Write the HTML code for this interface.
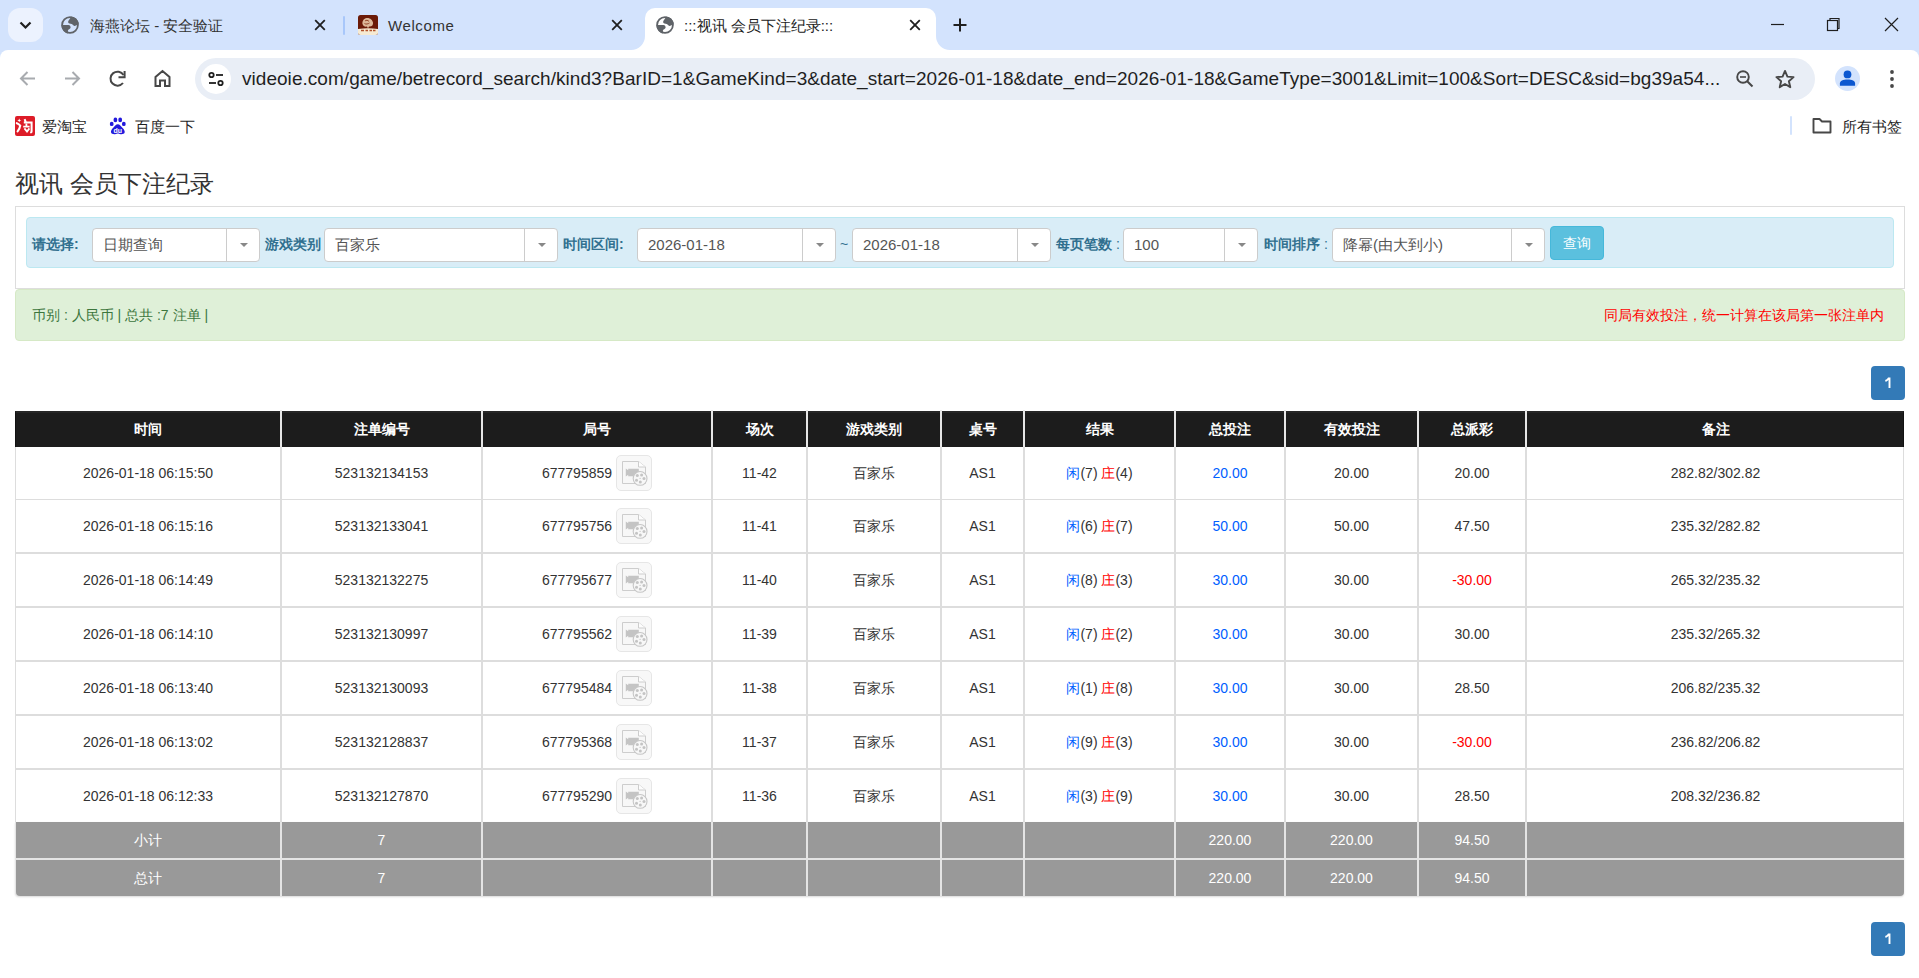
<!DOCTYPE html><html><head><meta charset="utf-8"><title>:::视讯 会员下注纪录:::</title><style>
*{margin:0;padding:0;box-sizing:border-box}
html,body{width:1919px;height:978px;overflow:hidden;background:#fff;font-family:"Liberation Sans",sans-serif;color:#333}
.a{position:absolute}
.t{position:absolute;white-space:nowrap}
svg{position:absolute;overflow:visible}
</style></head><body>
<div class="a" style="left:0;top:0;width:1919px;height:62px;background:#d3e3fd"></div>
<div class="a" style="left:8px;top:8px;width:35px;height:34px;border-radius:12px;background:#ecf2fe"></div>
<svg style="left:0;top:0" width="50" height="50"><path d="M20.5 22.5 L25.5 27.5 L30.5 22.5" fill="none" stroke="#1f1f1f" stroke-width="2.2"/></svg>
<svg style="left:60px;top:15px" width="20" height="20" viewBox="-10 -10 20 20"><circle cx="0" cy="0" r="7.9" fill="none" stroke="#5f6368" stroke-width="1.8"/><path d="M1 -8.6 C0.5 -6.5 -1.9 -4.8 -1.9 -2.9 C-1.9 -1.2 0.4 -1.4 1.7 -0.9 C3 -0.4 3.1 0.9 4.4 0.9 C5.7 0.9 7.1 0.1 8.4 -0.4 L8.7 -1.5 A8.7 8.7 0 0 0 1 -8.6 Z" fill="#5f6368"/><path d="M-8.6 0.1 L-1.6 0.1 C-0.1 0.1 0.7 1.4 0.6 2.7 C0.4 4.1 -2.1 4.1 -2.1 5.6 L-1.9 8.5 A8.7 8.7 0 0 1 -8.6 0.1 Z" fill="#5f6368"/></svg>
<div class="t" style="left:90px;top:17px;font-size:15px;line-height:18px;color:#333">海燕论坛 - 安全验证</div>
<svg style="left:310px;top:15px" width="20" height="20"><path d="M5.2 5.2 L14.8 14.8 M14.8 5.2 L5.2 14.8" stroke="#1f1f1f" stroke-width="1.8" fill="none"/></svg>
<div class="a" style="left:343px;top:16px;width:2px;height:19px;border-radius:1px;background:#a8c7fa"></div>
<svg style="left:358px;top:15px" width="20" height="20"><rect x="0" y="0" width="20" height="20" rx="2.5" fill="#6b1a07"/><path d="M0 14 Q10 12.5 20 14 V17.5 Q20 20 17.5 20 H2.5 Q0 20 0 17.5 Z" fill="#f6ead2"/><path d="M8.5 3 C6 3.5 4 6 4.5 9 C5 11 7 12 9 11.5 L10 13.5 L11 11.5 C13.5 12 15.5 10 15 7.5 C14.5 5 12 2.5 8.5 3 Z" fill="#e8c9a8" opacity="0.9"/><path d="M7 6 C8 5 10 5 11 6.5 M6.5 8.5 C8 9.5 10 9 11.5 8" stroke="#8a3a1e" stroke-width="0.9" fill="none"/><path d="M3 15.5 H6 M7.5 15.5 H10 M11.5 15.5 H14 M15 15.5 H17.5" stroke="#b0502a" stroke-width="1.6"/></svg>
<div class="t" style="left:388px;top:17px;font-size:15px;letter-spacing:0.6px;line-height:18px;color:#333">Welcome</div>
<svg style="left:607px;top:15px" width="20" height="20"><path d="M5.2 5.2 L14.8 14.8 M14.8 5.2 L5.2 14.8" stroke="#1f1f1f" stroke-width="1.8" fill="none"/></svg>
<div class="a" style="left:645px;top:8px;width:291px;height:43px;background:#fff;border-radius:10px 10px 0 0"></div>
<svg style="left:631px;top:36px" width="14" height="14"><path d="M0 14 A14 14 0 0 0 14 0 L14 14 Z" fill="#fff"/></svg>
<svg style="left:936px;top:36px" width="14" height="14"><path d="M14 14 A14 14 0 0 1 0 0 L0 14 Z" fill="#fff"/></svg>
<svg style="left:655px;top:15px" width="20" height="20" viewBox="-10 -10 20 20"><circle cx="0" cy="0" r="7.9" fill="none" stroke="#5f6368" stroke-width="1.8"/><path d="M1 -8.6 C0.5 -6.5 -1.9 -4.8 -1.9 -2.9 C-1.9 -1.2 0.4 -1.4 1.7 -0.9 C3 -0.4 3.1 0.9 4.4 0.9 C5.7 0.9 7.1 0.1 8.4 -0.4 L8.7 -1.5 A8.7 8.7 0 0 0 1 -8.6 Z" fill="#5f6368"/><path d="M-8.6 0.1 L-1.6 0.1 C-0.1 0.1 0.7 1.4 0.6 2.7 C0.4 4.1 -2.1 4.1 -2.1 5.6 L-1.9 8.5 A8.7 8.7 0 0 1 -8.6 0.1 Z" fill="#5f6368"/></svg>
<div class="t" style="left:684px;top:17px;font-size:15px;line-height:18px;color:#222">:::视讯 会员下注纪录:::</div>
<svg style="left:905px;top:15px" width="20" height="20"><path d="M5.2 5.2 L14.8 14.8 M14.8 5.2 L5.2 14.8" stroke="#1f1f1f" stroke-width="1.8" fill="none"/></svg>
<svg style="left:950px;top:15px" width="20" height="20"><path d="M10 3.5 V16.5 M3.5 10 H16.5" stroke="#1f1f1f" stroke-width="2" fill="none"/></svg>
<svg style="left:1760px;top:10px" width="150" height="30"><path d="M11 14.5 H24" stroke="#1f1f1f" stroke-width="1.2"/><rect x="67.5" y="10.5" width="10" height="10" fill="none" stroke="#1f1f1f" stroke-width="1.2"/><path d="M70 10.5 V8.5 H79 V18.5 H77.5" fill="none" stroke="#1f1f1f" stroke-width="1.2"/><path d="M125 8 L138 21 M138 8 L125 21" stroke="#1f1f1f" stroke-width="1.2"/></svg>
<div class="a" style="left:0;top:50px;width:1919px;height:98px;background:#fff;border-radius:8px 8px 0 0"></div>
<svg style="left:0;top:50px" width="200" height="55"><path d="M35 28.5 H21 M27.5 22 L21 28.5 L27.5 35" stroke="#a8abaf" stroke-width="2" fill="none"/><path d="M65 28.5 H79 M72.5 22 L79 28.5 L72.5 35" stroke="#a8abaf" stroke-width="2" fill="none"/><path d="M123.5 25 A7 7 0 1 0 123 33" stroke="#474747" stroke-width="2" fill="none"/><path d="M124.6 21 V27.3 H118.5" fill="none" stroke="#474747" stroke-width="2"/><path d="M155.5 36 V27 L162.5 21 L169.5 27 V36 H165 V30.5 H160 V36 Z" stroke="#474747" stroke-width="2" fill="none" stroke-linejoin="miter"/></svg>
<div class="a" style="left:195px;top:58px;width:1620px;height:42px;border-radius:21px;background:#e9eef6"></div>
<div class="a" style="left:201px;top:64px;width:30px;height:30px;border-radius:15px;background:#fff"></div>
<svg style="left:201px;top:64px" width="30" height="30"><circle cx="10.5" cy="11" r="2.2" fill="none" stroke="#1f1f1f" stroke-width="1.8"/><path d="M15 11 H22" stroke="#1f1f1f" stroke-width="1.8"/><circle cx="19.5" cy="19" r="2.2" fill="none" stroke="#1f1f1f" stroke-width="1.8"/><path d="M8 19 H15" stroke="#1f1f1f" stroke-width="1.8"/></svg>
<div class="t" id="url" style="left:242px;top:67px;font-size:19px;line-height:24px;letter-spacing:0.04px;color:#1f1f1f">videoie.com/game/betrecord_search/kind3?BarID=1&amp;GameKind=3&amp;date_start=2026-01-18&amp;date_end=2026-01-18&amp;GameType=3001&amp;Limit=100&amp;Sort=DESC&amp;sid=bg39a54...</div>
<svg style="left:1730px;top:64px" width="100" height="30"><circle cx="13" cy="13" r="5.8" fill="none" stroke="#474747" stroke-width="1.9"/><path d="M10 13 H16" stroke="#474747" stroke-width="1.6"/><path d="M17.2 17.2 L22.5 22.5" stroke="#474747" stroke-width="2"/><path d="M55.00 6.90 L57.41 12.58 L63.56 13.12 L58.90 17.17 L60.29 23.18 L55.00 20.00 L49.71 23.18 L51.10 17.17 L46.44 13.12 L52.59 12.58 Z" fill="none" stroke="#474747" stroke-width="1.9" stroke-linejoin="round"/></svg>
<div class="a" style="left:1835px;top:66px;width:25px;height:25px;border-radius:13px;background:#d3e3fd"></div>
<svg style="left:1835px;top:66px" width="25" height="25"><circle cx="12.5" cy="8.4" r="3.9" fill="#0b57d0"/><path d="M4.9 19.7 V17.6 C4.9 15 8 13.6 12.5 13.6 C17 13.6 20.1 15 20.1 17.6 V19.7 Z" fill="#0b57d0"/></svg>
<svg style="left:1882px;top:64px" width="20" height="30"><circle cx="10" cy="8" r="1.9" fill="#474747"/><circle cx="10" cy="15" r="1.9" fill="#474747"/><circle cx="10" cy="22" r="1.9" fill="#474747"/></svg>
<svg style="left:15px;top:116px" width="20" height="20"><rect x="0" y="0" width="20" height="20" rx="2" fill="#dd1c28"/><path d="M4.2 2.6 L4.9 4 L6.3 4.4 L4.9 4.9 L4.2 6.3 L3.6 4.9 L2.2 4.4 L3.6 4 Z" fill="#fff"/><path d="M1.8 7.2 Q4 8 5.2 9.6 Q4.8 12.8 2.6 15.4" fill="none" stroke="#fff" stroke-width="2.1" stroke-linecap="round"/><path d="M9.6 3.2 L10.8 6.2 M8.8 6.6 H16.6 V15.6 Q16.6 16.6 15.2 16.2" fill="none" stroke="#fff" stroke-width="2"/><path d="M8.2 10.6 H14.6 M11.4 7.6 V10.8" fill="none" stroke="#fff" stroke-width="1.8"/><path d="M9.4 12.4 L12 15.6 L14.4 12.4" fill="none" stroke="#fff" stroke-width="1.8"/></svg>
<div class="t" style="left:42px;top:118px;font-size:15px;line-height:18px;color:#1f1f1f">爱淘宝</div>
<svg style="left:108px;top:117px" width="20" height="20"><ellipse cx="3.7" cy="6.9" rx="1.9" ry="2.2" fill="#2319dc"/><ellipse cx="7.4" cy="2.9" rx="1.9" ry="2.3" fill="#2319dc"/><ellipse cx="12.2" cy="2.9" rx="1.9" ry="2.3" fill="#2319dc"/><ellipse cx="15.8" cy="6.9" rx="1.9" ry="2.2" fill="#2319dc"/><path d="M9.8 7.3 C8 7.3 6.5 9.5 5 11 C3.5 12.5 2.8 14 3 15.3 C3.3 17 5 17.3 7 17.2 C8.5 17.1 9 16.6 9.8 16.6 C10.6 16.6 11.2 17.1 12.7 17.2 C14.7 17.3 16.5 17 16.7 15.3 C16.9 14 16 12.5 14.6 11 C13.1 9.5 11.6 7.3 9.8 7.3 Z" fill="#2319dc"/><text x="9.7" y="15.6" font-size="7" font-weight="bold" fill="#fff" text-anchor="middle" font-family="Liberation Sans">du</text></svg>
<div class="t" style="left:135px;top:118px;font-size:15px;line-height:18px;color:#1f1f1f">百度一下</div>
<div class="a" style="left:1790px;top:116px;width:2px;height:19px;border-radius:1px;background:#d3e3fd"></div>
<svg style="left:1810px;top:114px" width="25" height="22"><path d="M3.5 5 H9.5 L12 7.5 H20.5 V18.5 H3.5 Z" fill="none" stroke="#474747" stroke-width="1.9" stroke-linejoin="round"/></svg>
<div class="t" style="left:1842px;top:118px;font-size:15px;line-height:18px;color:#1f1f1f">所有书签</div>
<div class="t" style="left:15px;top:170px;font-size:24px;line-height:28px;color:#333">视讯 会员下注纪录</div>
<div class="a" style="left:15px;top:206px;width:1890px;height:83px;border:1px solid #ddd;border-bottom-color:#ddd"></div>
<div class="a" style="left:26px;top:217px;width:1868px;height:51px;border:1px solid #bce8f1;background:#d9edf7;border-radius:4px"></div>
<div class="t" style="left:32px;top:236px;font-size:14px;line-height:17px;font-weight:bold;color:#31708f">请选择:</div>
<div class="a" style="left:92px;top:228px;width:168px;height:34px;border:1px solid #ccc;border-radius:4px;background:#fff"></div>
<div class="a" style="left:226px;top:229px;width:1px;height:32px;background:#ccc"></div>
<svg style="left:239px;top:240px" width="12" height="10"><path d="M1 3 H9 L5 7 Z" fill="#888"/></svg>
<div class="t" style="left:103px;top:236px;font-size:15px;line-height:18px;color:#555">日期查询</div>
<div class="t" style="left:265px;top:236px;font-size:14px;line-height:17px;font-weight:bold;color:#31708f">游戏类别</div>
<div class="a" style="left:324px;top:228px;width:234px;height:34px;border:1px solid #ccc;border-radius:4px;background:#fff"></div>
<div class="a" style="left:524px;top:229px;width:1px;height:32px;background:#ccc"></div>
<svg style="left:537px;top:240px" width="12" height="10"><path d="M1 3 H9 L5 7 Z" fill="#888"/></svg>
<div class="t" style="left:335px;top:236px;font-size:15px;line-height:18px;color:#555">百家乐</div>
<div class="t" style="left:563px;top:236px;font-size:14px;line-height:17px;font-weight:bold;color:#31708f">时间区间:</div>
<div class="a" style="left:637px;top:228px;width:199px;height:34px;border:1px solid #ccc;border-radius:4px;background:#fff"></div>
<div class="a" style="left:802px;top:229px;width:1px;height:32px;background:#ccc"></div>
<svg style="left:815px;top:240px" width="12" height="10"><path d="M1 3 H9 L5 7 Z" fill="#888"/></svg>
<div class="t" style="left:648px;top:236px;font-size:15px;line-height:18px;color:#555">2026-01-18</div>
<div class="t" style="left:840px;top:236px;font-size:14px;line-height:17px;color:#31708f">~</div>
<div class="a" style="left:852px;top:228px;width:199px;height:34px;border:1px solid #ccc;border-radius:4px;background:#fff"></div>
<div class="a" style="left:1017px;top:229px;width:1px;height:32px;background:#ccc"></div>
<svg style="left:1030px;top:240px" width="12" height="10"><path d="M1 3 H9 L5 7 Z" fill="#888"/></svg>
<div class="t" style="left:863px;top:236px;font-size:15px;line-height:18px;color:#555">2026-01-18</div>
<div class="t" style="left:1056px;top:236px;font-size:14px;line-height:17px;font-weight:bold;color:#31708f">每页笔数<span style="font-weight:normal"> :</span></div>
<div class="a" style="left:1123px;top:228px;width:135px;height:34px;border:1px solid #ccc;border-radius:4px;background:#fff"></div>
<div class="a" style="left:1224px;top:229px;width:1px;height:32px;background:#ccc"></div>
<svg style="left:1237px;top:240px" width="12" height="10"><path d="M1 3 H9 L5 7 Z" fill="#888"/></svg>
<div class="t" style="left:1134px;top:236px;font-size:15px;line-height:18px;color:#555">100</div>
<div class="t" style="left:1264px;top:236px;font-size:14px;line-height:17px;font-weight:bold;color:#31708f">时间排序<span style="font-weight:normal"> :</span></div>
<div class="a" style="left:1332px;top:228px;width:213px;height:34px;border:1px solid #ccc;border-radius:4px;background:#fff"></div>
<div class="a" style="left:1511px;top:229px;width:1px;height:32px;background:#ccc"></div>
<svg style="left:1524px;top:240px" width="12" height="10"><path d="M1 3 H9 L5 7 Z" fill="#888"/></svg>
<div class="t" style="left:1343px;top:236px;font-size:15px;line-height:18px;color:#555">降幂(由大到小)</div>
<div class="a" style="left:1550px;top:226px;width:54px;height:34px;border-radius:4px;background:#5bc0de;border:1px solid #46b8da;color:#fff;font-size:14px;line-height:32px;text-align:center">查询</div>
<div class="a" style="left:15px;top:289px;width:1890px;height:52px;border:1px solid #d6e9c6;background:#dff0d8;border-radius:4px"></div>
<div class="t" style="left:32px;top:307px;font-size:14px;line-height:17px;color:#3c763d">币别 : 人民币 | 总共 :7 注单 |</div>
<div class="t" style="left:1604px;top:307px;font-size:14px;line-height:17px;color:#ff0000">同局有效投注，统一计算在该局第一张注单内</div>
<div class="a" style="left:1871px;top:366px;width:34px;height:34px;border-radius:4px;background:#337ab7"></div>
<svg style="left:1871px;top:366px" width="34" height="34"><path d="M14.4 15 C15.9 14.5 17 13.6 17.6 12.4 H18.5 V22" fill="none" stroke="#fff" stroke-width="1.9"/></svg>
<div class="a" style="left:1871px;top:922px;width:34px;height:34px;border-radius:4px;background:#337ab7"></div>
<svg style="left:1871px;top:922px" width="34" height="34"><path d="M14.4 15 C15.9 14.5 17 13.6 17.6 12.4 H18.5 V22" fill="none" stroke="#fff" stroke-width="1.9"/></svg>
<div class="a" style="left:15px;top:411px;width:1889px;height:36px;background:#1c1c1c;border-top:2px solid #262626;border-left:1px solid #111;border-right:1px solid #111"></div>
<div class="t" style="left:16px;top:411px;width:264px;height:36px;line-height:36px;text-align:center;font-size:14px;font-weight:bold;color:#fff">时间</div>
<div class="t" style="left:282px;top:411px;width:199px;height:36px;line-height:36px;text-align:center;font-size:14px;font-weight:bold;color:#fff">注单编号</div>
<div class="t" style="left:483px;top:411px;width:228px;height:36px;line-height:36px;text-align:center;font-size:14px;font-weight:bold;color:#fff">局号</div>
<div class="t" style="left:713px;top:411px;width:93px;height:36px;line-height:36px;text-align:center;font-size:14px;font-weight:bold;color:#fff">场次</div>
<div class="t" style="left:808px;top:411px;width:132px;height:36px;line-height:36px;text-align:center;font-size:14px;font-weight:bold;color:#fff">游戏类别</div>
<div class="t" style="left:942px;top:411px;width:81px;height:36px;line-height:36px;text-align:center;font-size:14px;font-weight:bold;color:#fff">桌号</div>
<div class="t" style="left:1025px;top:411px;width:149px;height:36px;line-height:36px;text-align:center;font-size:14px;font-weight:bold;color:#fff">结果</div>
<div class="t" style="left:1176px;top:411px;width:108px;height:36px;line-height:36px;text-align:center;font-size:14px;font-weight:bold;color:#fff">总投注</div>
<div class="t" style="left:1286px;top:411px;width:131px;height:36px;line-height:36px;text-align:center;font-size:14px;font-weight:bold;color:#fff">有效投注</div>
<div class="t" style="left:1419px;top:411px;width:106px;height:36px;line-height:36px;text-align:center;font-size:14px;font-weight:bold;color:#fff">总派彩</div>
<div class="t" style="left:1527px;top:411px;width:377px;height:36px;line-height:36px;text-align:center;font-size:14px;font-weight:bold;color:#fff">备注</div>
<div class="a" style="left:280px;top:410px;width:2px;height:37px;background:#e6e6e6"></div>
<div class="a" style="left:481px;top:410px;width:2px;height:37px;background:#e6e6e6"></div>
<div class="a" style="left:711px;top:410px;width:2px;height:37px;background:#e6e6e6"></div>
<div class="a" style="left:806px;top:410px;width:2px;height:37px;background:#e6e6e6"></div>
<div class="a" style="left:940px;top:410px;width:2px;height:37px;background:#e6e6e6"></div>
<div class="a" style="left:1023px;top:410px;width:2px;height:37px;background:#e6e6e6"></div>
<div class="a" style="left:1174px;top:410px;width:2px;height:37px;background:#e6e6e6"></div>
<div class="a" style="left:1284px;top:410px;width:2px;height:37px;background:#e6e6e6"></div>
<div class="a" style="left:1417px;top:410px;width:2px;height:37px;background:#e6e6e6"></div>
<div class="a" style="left:1525px;top:410px;width:2px;height:37px;background:#e6e6e6"></div>
<div class="a" style="left:15px;top:447px;width:1889px;height:375px;border-left:1px solid #ddd;border-right:1px solid #ddd"></div>
<div class="a" style="left:15px;top:499px;width:1889px;height:1px;background:#ddd"></div>
<div class="a" style="left:15px;top:552px;width:1889px;height:2px;background:#ddd"></div>
<div class="a" style="left:15px;top:606px;width:1889px;height:2px;background:#ddd"></div>
<div class="a" style="left:15px;top:660px;width:1889px;height:2px;background:#ddd"></div>
<div class="a" style="left:15px;top:714px;width:1889px;height:2px;background:#ddd"></div>
<div class="a" style="left:15px;top:768px;width:1889px;height:2px;background:#ddd"></div>
<div class="a" style="left:280px;top:447px;width:2px;height:375px;background:#ddd"></div>
<div class="a" style="left:481px;top:447px;width:2px;height:375px;background:#ddd"></div>
<div class="a" style="left:711px;top:447px;width:2px;height:375px;background:#ddd"></div>
<div class="a" style="left:806px;top:447px;width:2px;height:375px;background:#ddd"></div>
<div class="a" style="left:940px;top:447px;width:2px;height:375px;background:#ddd"></div>
<div class="a" style="left:1023px;top:447px;width:2px;height:375px;background:#ddd"></div>
<div class="a" style="left:1174px;top:447px;width:2px;height:375px;background:#ddd"></div>
<div class="a" style="left:1284px;top:447px;width:2px;height:375px;background:#ddd"></div>
<div class="a" style="left:1417px;top:447px;width:2px;height:375px;background:#ddd"></div>
<div class="a" style="left:1525px;top:447px;width:2px;height:375px;background:#ddd"></div>
<div class="t" style="left:16px;top:447px;width:264px;height:52px;line-height:52px;text-align:center;font-size:14px;">2026-01-18 06:15:50</div>
<div class="t" style="left:282px;top:447px;width:199px;height:52px;line-height:52px;text-align:center;font-size:14px;">523132134153</div>
<div class="a" style="left:483px;top:447px;width:228px;height:52px;display:flex;align-items:center;justify-content:center;font-size:14px"><span style="margin-top:-1px">677795859</span><span style="display:block;position:relative;width:36px;height:36px;margin-left:4px;margin-top:-1px;border:1px solid #e6e6e6;border-radius:5px;background:#f8f8f8"><svg style="left:0;top:0" width="34" height="34"><path d="M5.5 5.5 H21.5 L28.5 11 V27.5 H5.5 Z" fill="#f7f7f7" stroke="#cdcdcd" stroke-width="1"/><path d="M21.5 5.5 V11 H28.5" fill="#fdfdfd" stroke="#cdcdcd"/><path d="M8.8 12.5 L11.2 14.2 V12.8 H21.8 V20.2 H11.2 V18.8 L8.8 20.5 Z" fill="#c4c4c4"/><circle cx="23.1" cy="22.4" r="6.9" fill="#f7f7f7" stroke="#c6c6c6" stroke-width="1.1"/><circle cx="20.3" cy="19.6" r="1.5" fill="#c4c4c4"/><circle cx="24.6" cy="19" r="1.5" fill="#c4c4c4"/><circle cx="27" cy="22.6" r="1.5" fill="#c4c4c4"/><circle cx="23.3" cy="26" r="1.5" fill="#c4c4c4"/><circle cx="19.5" cy="24.3" r="1.5" fill="#c4c4c4"/><circle cx="23.1" cy="22.4" r="0.6" fill="#c4c4c4"/></svg></span></div>
<div class="t" style="left:713px;top:447px;width:93px;height:52px;line-height:52px;text-align:center;font-size:14px;">11-42</div>
<div class="t" style="left:808px;top:447px;width:132px;height:52px;line-height:52px;text-align:center;font-size:14px;">百家乐</div>
<div class="t" style="left:942px;top:447px;width:81px;height:52px;line-height:52px;text-align:center;font-size:14px;">AS1</div>
<div class="t" style="left:1025px;top:447px;width:149px;height:52px;line-height:52px;text-align:center;font-size:14px;"><span style="color:#0060ff">闲</span>(7) <span style="color:#ff0000">庄</span>(4)</div>
<div class="t" style="left:1176px;top:447px;width:108px;height:52px;line-height:52px;text-align:center;font-size:14px;color:#0060ff">20.00</div>
<div class="t" style="left:1286px;top:447px;width:131px;height:52px;line-height:52px;text-align:center;font-size:14px;">20.00</div>
<div class="t" style="left:1419px;top:447px;width:106px;height:52px;line-height:52px;text-align:center;font-size:14px;">20.00</div>
<div class="t" style="left:1527px;top:447px;width:377px;height:52px;line-height:52px;text-align:center;font-size:14px;">282.82/302.82</div>
<div class="t" style="left:16px;top:500px;width:264px;height:52px;line-height:52px;text-align:center;font-size:14px;">2026-01-18 06:15:16</div>
<div class="t" style="left:282px;top:500px;width:199px;height:52px;line-height:52px;text-align:center;font-size:14px;">523132133041</div>
<div class="a" style="left:483px;top:500px;width:228px;height:52px;display:flex;align-items:center;justify-content:center;font-size:14px"><span style="margin-top:-1px">677795756</span><span style="display:block;position:relative;width:36px;height:36px;margin-left:4px;margin-top:-1px;border:1px solid #e6e6e6;border-radius:5px;background:#f8f8f8"><svg style="left:0;top:0" width="34" height="34"><path d="M5.5 5.5 H21.5 L28.5 11 V27.5 H5.5 Z" fill="#f7f7f7" stroke="#cdcdcd" stroke-width="1"/><path d="M21.5 5.5 V11 H28.5" fill="#fdfdfd" stroke="#cdcdcd"/><path d="M8.8 12.5 L11.2 14.2 V12.8 H21.8 V20.2 H11.2 V18.8 L8.8 20.5 Z" fill="#c4c4c4"/><circle cx="23.1" cy="22.4" r="6.9" fill="#f7f7f7" stroke="#c6c6c6" stroke-width="1.1"/><circle cx="20.3" cy="19.6" r="1.5" fill="#c4c4c4"/><circle cx="24.6" cy="19" r="1.5" fill="#c4c4c4"/><circle cx="27" cy="22.6" r="1.5" fill="#c4c4c4"/><circle cx="23.3" cy="26" r="1.5" fill="#c4c4c4"/><circle cx="19.5" cy="24.3" r="1.5" fill="#c4c4c4"/><circle cx="23.1" cy="22.4" r="0.6" fill="#c4c4c4"/></svg></span></div>
<div class="t" style="left:713px;top:500px;width:93px;height:52px;line-height:52px;text-align:center;font-size:14px;">11-41</div>
<div class="t" style="left:808px;top:500px;width:132px;height:52px;line-height:52px;text-align:center;font-size:14px;">百家乐</div>
<div class="t" style="left:942px;top:500px;width:81px;height:52px;line-height:52px;text-align:center;font-size:14px;">AS1</div>
<div class="t" style="left:1025px;top:500px;width:149px;height:52px;line-height:52px;text-align:center;font-size:14px;"><span style="color:#0060ff">闲</span>(6) <span style="color:#ff0000">庄</span>(7)</div>
<div class="t" style="left:1176px;top:500px;width:108px;height:52px;line-height:52px;text-align:center;font-size:14px;color:#0060ff">50.00</div>
<div class="t" style="left:1286px;top:500px;width:131px;height:52px;line-height:52px;text-align:center;font-size:14px;">50.00</div>
<div class="t" style="left:1419px;top:500px;width:106px;height:52px;line-height:52px;text-align:center;font-size:14px;">47.50</div>
<div class="t" style="left:1527px;top:500px;width:377px;height:52px;line-height:52px;text-align:center;font-size:14px;">235.32/282.82</div>
<div class="t" style="left:16px;top:554px;width:264px;height:52px;line-height:52px;text-align:center;font-size:14px;">2026-01-18 06:14:49</div>
<div class="t" style="left:282px;top:554px;width:199px;height:52px;line-height:52px;text-align:center;font-size:14px;">523132132275</div>
<div class="a" style="left:483px;top:554px;width:228px;height:52px;display:flex;align-items:center;justify-content:center;font-size:14px"><span style="margin-top:-1px">677795677</span><span style="display:block;position:relative;width:36px;height:36px;margin-left:4px;margin-top:-1px;border:1px solid #e6e6e6;border-radius:5px;background:#f8f8f8"><svg style="left:0;top:0" width="34" height="34"><path d="M5.5 5.5 H21.5 L28.5 11 V27.5 H5.5 Z" fill="#f7f7f7" stroke="#cdcdcd" stroke-width="1"/><path d="M21.5 5.5 V11 H28.5" fill="#fdfdfd" stroke="#cdcdcd"/><path d="M8.8 12.5 L11.2 14.2 V12.8 H21.8 V20.2 H11.2 V18.8 L8.8 20.5 Z" fill="#c4c4c4"/><circle cx="23.1" cy="22.4" r="6.9" fill="#f7f7f7" stroke="#c6c6c6" stroke-width="1.1"/><circle cx="20.3" cy="19.6" r="1.5" fill="#c4c4c4"/><circle cx="24.6" cy="19" r="1.5" fill="#c4c4c4"/><circle cx="27" cy="22.6" r="1.5" fill="#c4c4c4"/><circle cx="23.3" cy="26" r="1.5" fill="#c4c4c4"/><circle cx="19.5" cy="24.3" r="1.5" fill="#c4c4c4"/><circle cx="23.1" cy="22.4" r="0.6" fill="#c4c4c4"/></svg></span></div>
<div class="t" style="left:713px;top:554px;width:93px;height:52px;line-height:52px;text-align:center;font-size:14px;">11-40</div>
<div class="t" style="left:808px;top:554px;width:132px;height:52px;line-height:52px;text-align:center;font-size:14px;">百家乐</div>
<div class="t" style="left:942px;top:554px;width:81px;height:52px;line-height:52px;text-align:center;font-size:14px;">AS1</div>
<div class="t" style="left:1025px;top:554px;width:149px;height:52px;line-height:52px;text-align:center;font-size:14px;"><span style="color:#0060ff">闲</span>(8) <span style="color:#ff0000">庄</span>(3)</div>
<div class="t" style="left:1176px;top:554px;width:108px;height:52px;line-height:52px;text-align:center;font-size:14px;color:#0060ff">30.00</div>
<div class="t" style="left:1286px;top:554px;width:131px;height:52px;line-height:52px;text-align:center;font-size:14px;">30.00</div>
<div class="t" style="left:1419px;top:554px;width:106px;height:52px;line-height:52px;text-align:center;font-size:14px;color:#ff0000">-30.00</div>
<div class="t" style="left:1527px;top:554px;width:377px;height:52px;line-height:52px;text-align:center;font-size:14px;">265.32/235.32</div>
<div class="t" style="left:16px;top:608px;width:264px;height:52px;line-height:52px;text-align:center;font-size:14px;">2026-01-18 06:14:10</div>
<div class="t" style="left:282px;top:608px;width:199px;height:52px;line-height:52px;text-align:center;font-size:14px;">523132130997</div>
<div class="a" style="left:483px;top:608px;width:228px;height:52px;display:flex;align-items:center;justify-content:center;font-size:14px"><span style="margin-top:-1px">677795562</span><span style="display:block;position:relative;width:36px;height:36px;margin-left:4px;margin-top:-1px;border:1px solid #e6e6e6;border-radius:5px;background:#f8f8f8"><svg style="left:0;top:0" width="34" height="34"><path d="M5.5 5.5 H21.5 L28.5 11 V27.5 H5.5 Z" fill="#f7f7f7" stroke="#cdcdcd" stroke-width="1"/><path d="M21.5 5.5 V11 H28.5" fill="#fdfdfd" stroke="#cdcdcd"/><path d="M8.8 12.5 L11.2 14.2 V12.8 H21.8 V20.2 H11.2 V18.8 L8.8 20.5 Z" fill="#c4c4c4"/><circle cx="23.1" cy="22.4" r="6.9" fill="#f7f7f7" stroke="#c6c6c6" stroke-width="1.1"/><circle cx="20.3" cy="19.6" r="1.5" fill="#c4c4c4"/><circle cx="24.6" cy="19" r="1.5" fill="#c4c4c4"/><circle cx="27" cy="22.6" r="1.5" fill="#c4c4c4"/><circle cx="23.3" cy="26" r="1.5" fill="#c4c4c4"/><circle cx="19.5" cy="24.3" r="1.5" fill="#c4c4c4"/><circle cx="23.1" cy="22.4" r="0.6" fill="#c4c4c4"/></svg></span></div>
<div class="t" style="left:713px;top:608px;width:93px;height:52px;line-height:52px;text-align:center;font-size:14px;">11-39</div>
<div class="t" style="left:808px;top:608px;width:132px;height:52px;line-height:52px;text-align:center;font-size:14px;">百家乐</div>
<div class="t" style="left:942px;top:608px;width:81px;height:52px;line-height:52px;text-align:center;font-size:14px;">AS1</div>
<div class="t" style="left:1025px;top:608px;width:149px;height:52px;line-height:52px;text-align:center;font-size:14px;"><span style="color:#0060ff">闲</span>(7) <span style="color:#ff0000">庄</span>(2)</div>
<div class="t" style="left:1176px;top:608px;width:108px;height:52px;line-height:52px;text-align:center;font-size:14px;color:#0060ff">30.00</div>
<div class="t" style="left:1286px;top:608px;width:131px;height:52px;line-height:52px;text-align:center;font-size:14px;">30.00</div>
<div class="t" style="left:1419px;top:608px;width:106px;height:52px;line-height:52px;text-align:center;font-size:14px;">30.00</div>
<div class="t" style="left:1527px;top:608px;width:377px;height:52px;line-height:52px;text-align:center;font-size:14px;">235.32/265.32</div>
<div class="t" style="left:16px;top:662px;width:264px;height:52px;line-height:52px;text-align:center;font-size:14px;">2026-01-18 06:13:40</div>
<div class="t" style="left:282px;top:662px;width:199px;height:52px;line-height:52px;text-align:center;font-size:14px;">523132130093</div>
<div class="a" style="left:483px;top:662px;width:228px;height:52px;display:flex;align-items:center;justify-content:center;font-size:14px"><span style="margin-top:-1px">677795484</span><span style="display:block;position:relative;width:36px;height:36px;margin-left:4px;margin-top:-1px;border:1px solid #e6e6e6;border-radius:5px;background:#f8f8f8"><svg style="left:0;top:0" width="34" height="34"><path d="M5.5 5.5 H21.5 L28.5 11 V27.5 H5.5 Z" fill="#f7f7f7" stroke="#cdcdcd" stroke-width="1"/><path d="M21.5 5.5 V11 H28.5" fill="#fdfdfd" stroke="#cdcdcd"/><path d="M8.8 12.5 L11.2 14.2 V12.8 H21.8 V20.2 H11.2 V18.8 L8.8 20.5 Z" fill="#c4c4c4"/><circle cx="23.1" cy="22.4" r="6.9" fill="#f7f7f7" stroke="#c6c6c6" stroke-width="1.1"/><circle cx="20.3" cy="19.6" r="1.5" fill="#c4c4c4"/><circle cx="24.6" cy="19" r="1.5" fill="#c4c4c4"/><circle cx="27" cy="22.6" r="1.5" fill="#c4c4c4"/><circle cx="23.3" cy="26" r="1.5" fill="#c4c4c4"/><circle cx="19.5" cy="24.3" r="1.5" fill="#c4c4c4"/><circle cx="23.1" cy="22.4" r="0.6" fill="#c4c4c4"/></svg></span></div>
<div class="t" style="left:713px;top:662px;width:93px;height:52px;line-height:52px;text-align:center;font-size:14px;">11-38</div>
<div class="t" style="left:808px;top:662px;width:132px;height:52px;line-height:52px;text-align:center;font-size:14px;">百家乐</div>
<div class="t" style="left:942px;top:662px;width:81px;height:52px;line-height:52px;text-align:center;font-size:14px;">AS1</div>
<div class="t" style="left:1025px;top:662px;width:149px;height:52px;line-height:52px;text-align:center;font-size:14px;"><span style="color:#0060ff">闲</span>(1) <span style="color:#ff0000">庄</span>(8)</div>
<div class="t" style="left:1176px;top:662px;width:108px;height:52px;line-height:52px;text-align:center;font-size:14px;color:#0060ff">30.00</div>
<div class="t" style="left:1286px;top:662px;width:131px;height:52px;line-height:52px;text-align:center;font-size:14px;">30.00</div>
<div class="t" style="left:1419px;top:662px;width:106px;height:52px;line-height:52px;text-align:center;font-size:14px;">28.50</div>
<div class="t" style="left:1527px;top:662px;width:377px;height:52px;line-height:52px;text-align:center;font-size:14px;">206.82/235.32</div>
<div class="t" style="left:16px;top:716px;width:264px;height:52px;line-height:52px;text-align:center;font-size:14px;">2026-01-18 06:13:02</div>
<div class="t" style="left:282px;top:716px;width:199px;height:52px;line-height:52px;text-align:center;font-size:14px;">523132128837</div>
<div class="a" style="left:483px;top:716px;width:228px;height:52px;display:flex;align-items:center;justify-content:center;font-size:14px"><span style="margin-top:-1px">677795368</span><span style="display:block;position:relative;width:36px;height:36px;margin-left:4px;margin-top:-1px;border:1px solid #e6e6e6;border-radius:5px;background:#f8f8f8"><svg style="left:0;top:0" width="34" height="34"><path d="M5.5 5.5 H21.5 L28.5 11 V27.5 H5.5 Z" fill="#f7f7f7" stroke="#cdcdcd" stroke-width="1"/><path d="M21.5 5.5 V11 H28.5" fill="#fdfdfd" stroke="#cdcdcd"/><path d="M8.8 12.5 L11.2 14.2 V12.8 H21.8 V20.2 H11.2 V18.8 L8.8 20.5 Z" fill="#c4c4c4"/><circle cx="23.1" cy="22.4" r="6.9" fill="#f7f7f7" stroke="#c6c6c6" stroke-width="1.1"/><circle cx="20.3" cy="19.6" r="1.5" fill="#c4c4c4"/><circle cx="24.6" cy="19" r="1.5" fill="#c4c4c4"/><circle cx="27" cy="22.6" r="1.5" fill="#c4c4c4"/><circle cx="23.3" cy="26" r="1.5" fill="#c4c4c4"/><circle cx="19.5" cy="24.3" r="1.5" fill="#c4c4c4"/><circle cx="23.1" cy="22.4" r="0.6" fill="#c4c4c4"/></svg></span></div>
<div class="t" style="left:713px;top:716px;width:93px;height:52px;line-height:52px;text-align:center;font-size:14px;">11-37</div>
<div class="t" style="left:808px;top:716px;width:132px;height:52px;line-height:52px;text-align:center;font-size:14px;">百家乐</div>
<div class="t" style="left:942px;top:716px;width:81px;height:52px;line-height:52px;text-align:center;font-size:14px;">AS1</div>
<div class="t" style="left:1025px;top:716px;width:149px;height:52px;line-height:52px;text-align:center;font-size:14px;"><span style="color:#0060ff">闲</span>(9) <span style="color:#ff0000">庄</span>(3)</div>
<div class="t" style="left:1176px;top:716px;width:108px;height:52px;line-height:52px;text-align:center;font-size:14px;color:#0060ff">30.00</div>
<div class="t" style="left:1286px;top:716px;width:131px;height:52px;line-height:52px;text-align:center;font-size:14px;">30.00</div>
<div class="t" style="left:1419px;top:716px;width:106px;height:52px;line-height:52px;text-align:center;font-size:14px;color:#ff0000">-30.00</div>
<div class="t" style="left:1527px;top:716px;width:377px;height:52px;line-height:52px;text-align:center;font-size:14px;">236.82/206.82</div>
<div class="t" style="left:16px;top:770px;width:264px;height:52px;line-height:52px;text-align:center;font-size:14px;">2026-01-18 06:12:33</div>
<div class="t" style="left:282px;top:770px;width:199px;height:52px;line-height:52px;text-align:center;font-size:14px;">523132127870</div>
<div class="a" style="left:483px;top:770px;width:228px;height:52px;display:flex;align-items:center;justify-content:center;font-size:14px"><span style="margin-top:-1px">677795290</span><span style="display:block;position:relative;width:36px;height:36px;margin-left:4px;margin-top:-1px;border:1px solid #e6e6e6;border-radius:5px;background:#f8f8f8"><svg style="left:0;top:0" width="34" height="34"><path d="M5.5 5.5 H21.5 L28.5 11 V27.5 H5.5 Z" fill="#f7f7f7" stroke="#cdcdcd" stroke-width="1"/><path d="M21.5 5.5 V11 H28.5" fill="#fdfdfd" stroke="#cdcdcd"/><path d="M8.8 12.5 L11.2 14.2 V12.8 H21.8 V20.2 H11.2 V18.8 L8.8 20.5 Z" fill="#c4c4c4"/><circle cx="23.1" cy="22.4" r="6.9" fill="#f7f7f7" stroke="#c6c6c6" stroke-width="1.1"/><circle cx="20.3" cy="19.6" r="1.5" fill="#c4c4c4"/><circle cx="24.6" cy="19" r="1.5" fill="#c4c4c4"/><circle cx="27" cy="22.6" r="1.5" fill="#c4c4c4"/><circle cx="23.3" cy="26" r="1.5" fill="#c4c4c4"/><circle cx="19.5" cy="24.3" r="1.5" fill="#c4c4c4"/><circle cx="23.1" cy="22.4" r="0.6" fill="#c4c4c4"/></svg></span></div>
<div class="t" style="left:713px;top:770px;width:93px;height:52px;line-height:52px;text-align:center;font-size:14px;">11-36</div>
<div class="t" style="left:808px;top:770px;width:132px;height:52px;line-height:52px;text-align:center;font-size:14px;">百家乐</div>
<div class="t" style="left:942px;top:770px;width:81px;height:52px;line-height:52px;text-align:center;font-size:14px;">AS1</div>
<div class="t" style="left:1025px;top:770px;width:149px;height:52px;line-height:52px;text-align:center;font-size:14px;"><span style="color:#0060ff">闲</span>(3) <span style="color:#ff0000">庄</span>(9)</div>
<div class="t" style="left:1176px;top:770px;width:108px;height:52px;line-height:52px;text-align:center;font-size:14px;color:#0060ff">30.00</div>
<div class="t" style="left:1286px;top:770px;width:131px;height:52px;line-height:52px;text-align:center;font-size:14px;">30.00</div>
<div class="t" style="left:1419px;top:770px;width:106px;height:52px;line-height:52px;text-align:center;font-size:14px;">28.50</div>
<div class="t" style="left:1527px;top:770px;width:377px;height:52px;line-height:52px;text-align:center;font-size:14px;">208.32/236.82</div>
<div class="a" style="left:15px;top:822px;width:1889px;height:74px;background:#e4e4e4;border-radius:0 0 4px 4px;box-shadow:0 1px 2px rgba(0,0,0,0.15)"></div>
<div class="a" style="left:16px;top:822px;width:264px;height:36px;background:#999;"></div>
<div class="a" style="left:282px;top:822px;width:199px;height:36px;background:#999;"></div>
<div class="a" style="left:483px;top:822px;width:228px;height:36px;background:#999;"></div>
<div class="a" style="left:713px;top:822px;width:93px;height:36px;background:#999;"></div>
<div class="a" style="left:808px;top:822px;width:132px;height:36px;background:#999;"></div>
<div class="a" style="left:942px;top:822px;width:81px;height:36px;background:#999;"></div>
<div class="a" style="left:1025px;top:822px;width:149px;height:36px;background:#999;"></div>
<div class="a" style="left:1176px;top:822px;width:108px;height:36px;background:#999;"></div>
<div class="a" style="left:1286px;top:822px;width:131px;height:36px;background:#999;"></div>
<div class="a" style="left:1419px;top:822px;width:106px;height:36px;background:#999;"></div>
<div class="a" style="left:1527px;top:822px;width:377px;height:36px;background:#999;"></div>
<div class="t" style="left:16px;top:822px;width:264px;height:36px;line-height:36px;text-align:center;font-size:14px;color:#fff">小计</div>
<div class="t" style="left:282px;top:822px;width:199px;height:36px;line-height:36px;text-align:center;font-size:14px;color:#fff">7</div>
<div class="t" style="left:1176px;top:822px;width:108px;height:36px;line-height:36px;text-align:center;font-size:14px;color:#fff">220.00</div>
<div class="t" style="left:1286px;top:822px;width:131px;height:36px;line-height:36px;text-align:center;font-size:14px;color:#fff">220.00</div>
<div class="t" style="left:1419px;top:822px;width:106px;height:36px;line-height:36px;text-align:center;font-size:14px;color:#fff">94.50</div>
<div class="a" style="left:16px;top:860px;width:264px;height:36px;background:#999;border-radius:0 0 0 4px;"></div>
<div class="a" style="left:282px;top:860px;width:199px;height:36px;background:#999;"></div>
<div class="a" style="left:483px;top:860px;width:228px;height:36px;background:#999;"></div>
<div class="a" style="left:713px;top:860px;width:93px;height:36px;background:#999;"></div>
<div class="a" style="left:808px;top:860px;width:132px;height:36px;background:#999;"></div>
<div class="a" style="left:942px;top:860px;width:81px;height:36px;background:#999;"></div>
<div class="a" style="left:1025px;top:860px;width:149px;height:36px;background:#999;"></div>
<div class="a" style="left:1176px;top:860px;width:108px;height:36px;background:#999;"></div>
<div class="a" style="left:1286px;top:860px;width:131px;height:36px;background:#999;"></div>
<div class="a" style="left:1419px;top:860px;width:106px;height:36px;background:#999;"></div>
<div class="a" style="left:1527px;top:860px;width:377px;height:36px;background:#999;border-radius:0 0 4px 0;"></div>
<div class="t" style="left:16px;top:860px;width:264px;height:36px;line-height:36px;text-align:center;font-size:14px;color:#fff">总计</div>
<div class="t" style="left:282px;top:860px;width:199px;height:36px;line-height:36px;text-align:center;font-size:14px;color:#fff">7</div>
<div class="t" style="left:1176px;top:860px;width:108px;height:36px;line-height:36px;text-align:center;font-size:14px;color:#fff">220.00</div>
<div class="t" style="left:1286px;top:860px;width:131px;height:36px;line-height:36px;text-align:center;font-size:14px;color:#fff">220.00</div>
<div class="t" style="left:1419px;top:860px;width:106px;height:36px;line-height:36px;text-align:center;font-size:14px;color:#fff">94.50</div>
</body></html>
